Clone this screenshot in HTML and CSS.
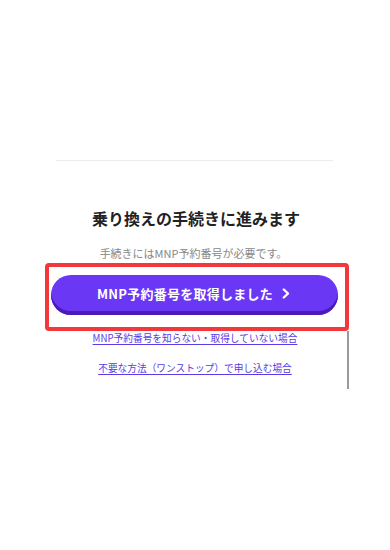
FILE: index.html
```html
<!DOCTYPE html>
<html lang="ja">
<head>
<meta charset="utf-8">
<link rel="stylesheet" href="styles.css">
</head>
<body>
<main class="page">
  <hr class="divider">
  <section class="proceed">
    <h2 class="title">乗り換えの手続きに進みます</h2>
    <p class="note">手続きにはMNP予約番号が必要です。</p>
    <div class="highlight">
      <a class="cta" href="#">
        <span class="cta-label">MNP予約番号を取得しました</span>
        <svg class="chev" width="8" height="11" viewBox="0 0 8 11"><path d="M1.8 1.5 L6 5.5 L1.8 9.5" fill="none" stroke="#fff" stroke-width="2.4" stroke-linecap="round" stroke-linejoin="round"/></svg>
      </a>
    </div>
    <div class="links">
      <a class="sub-link" href="#">MNP予約番号を知らない・取得していない場合</a>
      <a class="sub-link" href="#">不要な方法（ワンストップ）で申し込む場合</a>
    </div>
  </section>
</main>
</body>
</html>
```
FILE: styles.css
```css
* { box-sizing: border-box; }
html, body {
  margin: 0;
  padding: 0;
  background: #ffffff;
}
body {
  font-family: "Noto Sans CJK JP", "Noto Sans", sans-serif;
  color: #222;
  width: 390px;
  height: 550px;
  overflow: hidden;
}
.page {
  padding-top: 160px;
  display: flex;
  flex-direction: column;
  align-items: center;
}
.divider {
  width: 277px;
  height: 1px;
  margin: 0 0 0 -1px;
  border: 0;
  background: #ececec;
}
.proceed {
  width: 100%;
  display: flex;
  flex-direction: column;
  align-items: center;
  padding-top: 45px;
}
.title {
  margin: 0;
  font-size: 16px;
  line-height: 24px;
  font-weight: 700;
  color: #222;
  margin-left: 2px;
}
.note {
  margin: 14px 0 0;
  font-size: 11px;
  line-height: 18px;
  color: #888;
  margin-left: -3px;
}
.highlight {
  position: relative;
  margin-top: 1px;
  margin-left: 4px;
  width: 304px;
  height: 68px;
  border: 4px solid #f2383b;
  border-radius: 4px;
  padding: 8px 7px 12px 2px;
}
.highlight::after {
  content: "";
  position: absolute;
  left: 298px;
  top: 64px;
  width: 2px;
  height: 58px;
  background: #9a9a9a;
}
.cta {
  display: flex;
  align-items: center;
  justify-content: center;
  gap: 9px;
  width: 287px;
  height: 40px;
  border-radius: 20px;
  background: #6a37f4;
  box-shadow: inset 0 -4px 0 #4a1bb8;
  text-decoration: none;
  color: #fff;
  padding-bottom: 3px;
  padding-right: 2px;
}
.cta-label {
  font-size: 13px;
  font-weight: 700;
  letter-spacing: 0.02em;
  line-height: 20px;
}
.chev { display: block; }
.links {
  display: flex;
  flex-direction: column;
  align-items: center;
  gap: 16px;
}
.sub-link {
  font-size: 9.7px;
  line-height: 14px;
  color: #5a3be6;
  text-decoration: underline;
  text-underline-offset: 2px;
}
```
